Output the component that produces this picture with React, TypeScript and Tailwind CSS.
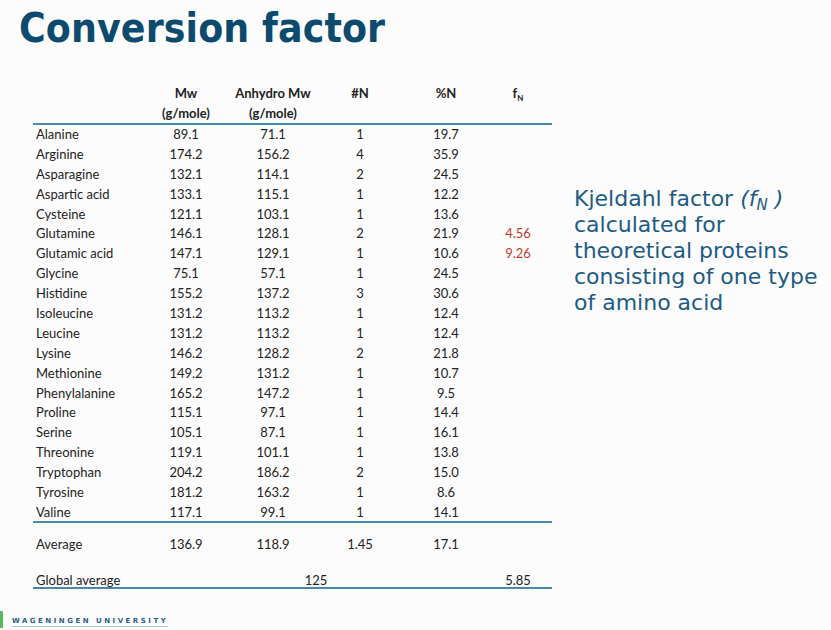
import React from "react";

const rows: [string, string, string, string, string, string][] = [
  ["Alanine", "89.1", "71.1", "1", "19.7", ""],
  ["Arginine", "174.2", "156.2", "4", "35.9", ""],
  ["Asparagine", "132.1", "114.1", "2", "24.5", ""],
  ["Aspartic acid", "133.1", "115.1", "1", "12.2", ""],
  ["Cysteine", "121.1", "103.1", "1", "13.6", ""],
  ["Glutamine", "146.1", "128.1", "2", "21.9", "4.56"],
  ["Glutamic acid", "147.1", "129.1", "1", "10.6", "9.26"],
  ["Glycine", "75.1", "57.1", "1", "24.5", ""],
  ["Histidine", "155.2", "137.2", "3", "30.6", ""],
  ["Isoleucine", "131.2", "113.2", "1", "12.4", ""],
  ["Leucine", "131.2", "113.2", "1", "12.4", ""],
  ["Lysine", "146.2", "128.2", "2", "21.8", ""],
  ["Methionine", "149.2", "131.2", "1", "10.7", ""],
  ["Phenylalanine", "165.2", "147.2", "1", "9.5", ""],
  ["Proline", "115.1", "97.1", "1", "14.4", ""],
  ["Serine", "105.1", "87.1", "1", "16.1", ""],
  ["Threonine", "119.1", "101.1", "1", "13.8", ""],
  ["Tryptophan", "204.2", "186.2", "2", "15.0", ""],
  ["Tyrosine", "181.2", "163.2", "1", "8.6", ""],
  ["Valine", "117.1", "99.1", "1", "14.1", ""],
];

const grid = "grid grid-cols-[110px_86px_88px_86px_86px_63px]";

export default function App() {
  return (
    <div className="w-[831px] h-[630px] bg-[#fcfcfc] relative overflow-hidden">
      <h1 className="pl-[19px] pt-[6px] text-[40.5px] leading-[44px] font-bold text-[#0c4a6e] [font-family:'DejaVu_Sans_Condensed','DejaVu_Sans',sans-serif] tracking-[0.1px]">
        Conversion factor
      </h1>
      <div className="flex">
        <div className="ml-[33px] mt-[33px] w-[519px] text-[13px] text-[#222] [font-family:Lato,sans-serif]">
          <div className={`${grid} font-bold leading-[20px] border-b-2 border-[#4a88a8]`}>
            <div />
            <div className="text-center">Mw<br />(g/mole)</div>
            <div className="text-center">Anhydro Mw<br />(g/mole)</div>
            <div className="text-center">#N</div>
            <div className="text-center">%N</div>
            <div className="text-center pr-[5px]">f<sub className="text-[8px] align-baseline relative top-[3px]">N</sub></div>
          </div>
          <div className="h-[398px] border-b-2 border-[#4a88a8]">
            {rows.map((r) => (
              <div key={r[0]} className={`${grid} h-[19.9px] leading-[19.9px]`}>
                <div className="pl-[3px]">{r[0]}</div>
                <div className="text-center">{r[1]}</div>
                <div className="text-center">{r[2]}</div>
                <div className="text-center">{r[3]}</div>
                <div className="text-center">{r[4]}</div>
                <div className="text-center pr-[5px] text-[#c0392b]">{r[5]}</div>
              </div>
            ))}
          </div>
          <div className={`${grid} h-[20px] leading-[20px] mt-[11px]`}>
            <div className="pl-[3px]">Average</div>
            <div className="text-center">136.9</div>
            <div className="text-center">118.9</div>
            <div className="text-center">1.45</div>
            <div className="text-center">17.1</div>
            <div />
          </div>
          <div className={`${grid} h-[19px] leading-[20px] mt-[16px] border-b-2 border-[#4a88a8]`}>
            <div className="pl-[3px]">Global average</div>
            <div />
            <div className="col-span-2 text-center">125</div>
            <div />
            <div className="text-center pr-[5px]">5.85</div>
          </div>
        </div>
        <div className="ml-[22px] mt-[136px] text-[22px] leading-[26px] text-[#1d5b82] [font-family:'DejaVu_Sans',sans-serif] whitespace-nowrap">
          Kjeldahl factor <i>(f<sub className="text-[15px] align-baseline relative top-[4px]">N</sub> )</i>
          <br />calculated for
          <br />theoretical proteins
          <br />consisting of one type
          <br />of amino acid
        </div>
      </div>
      <div className="absolute left-0 top-[611px] w-[3px] h-[17px] bg-[#5cb85c]" />
      <div className="absolute left-[12px] top-[616px] text-[7px] font-bold tracking-[2.5px] text-[#2c5d8a] [font-family:'DejaVu_Sans',sans-serif] leading-[10px] border-b border-[#a9c4dc]">
        WAGENINGEN UNIVERSITY
      </div>
    </div>
  );
}
